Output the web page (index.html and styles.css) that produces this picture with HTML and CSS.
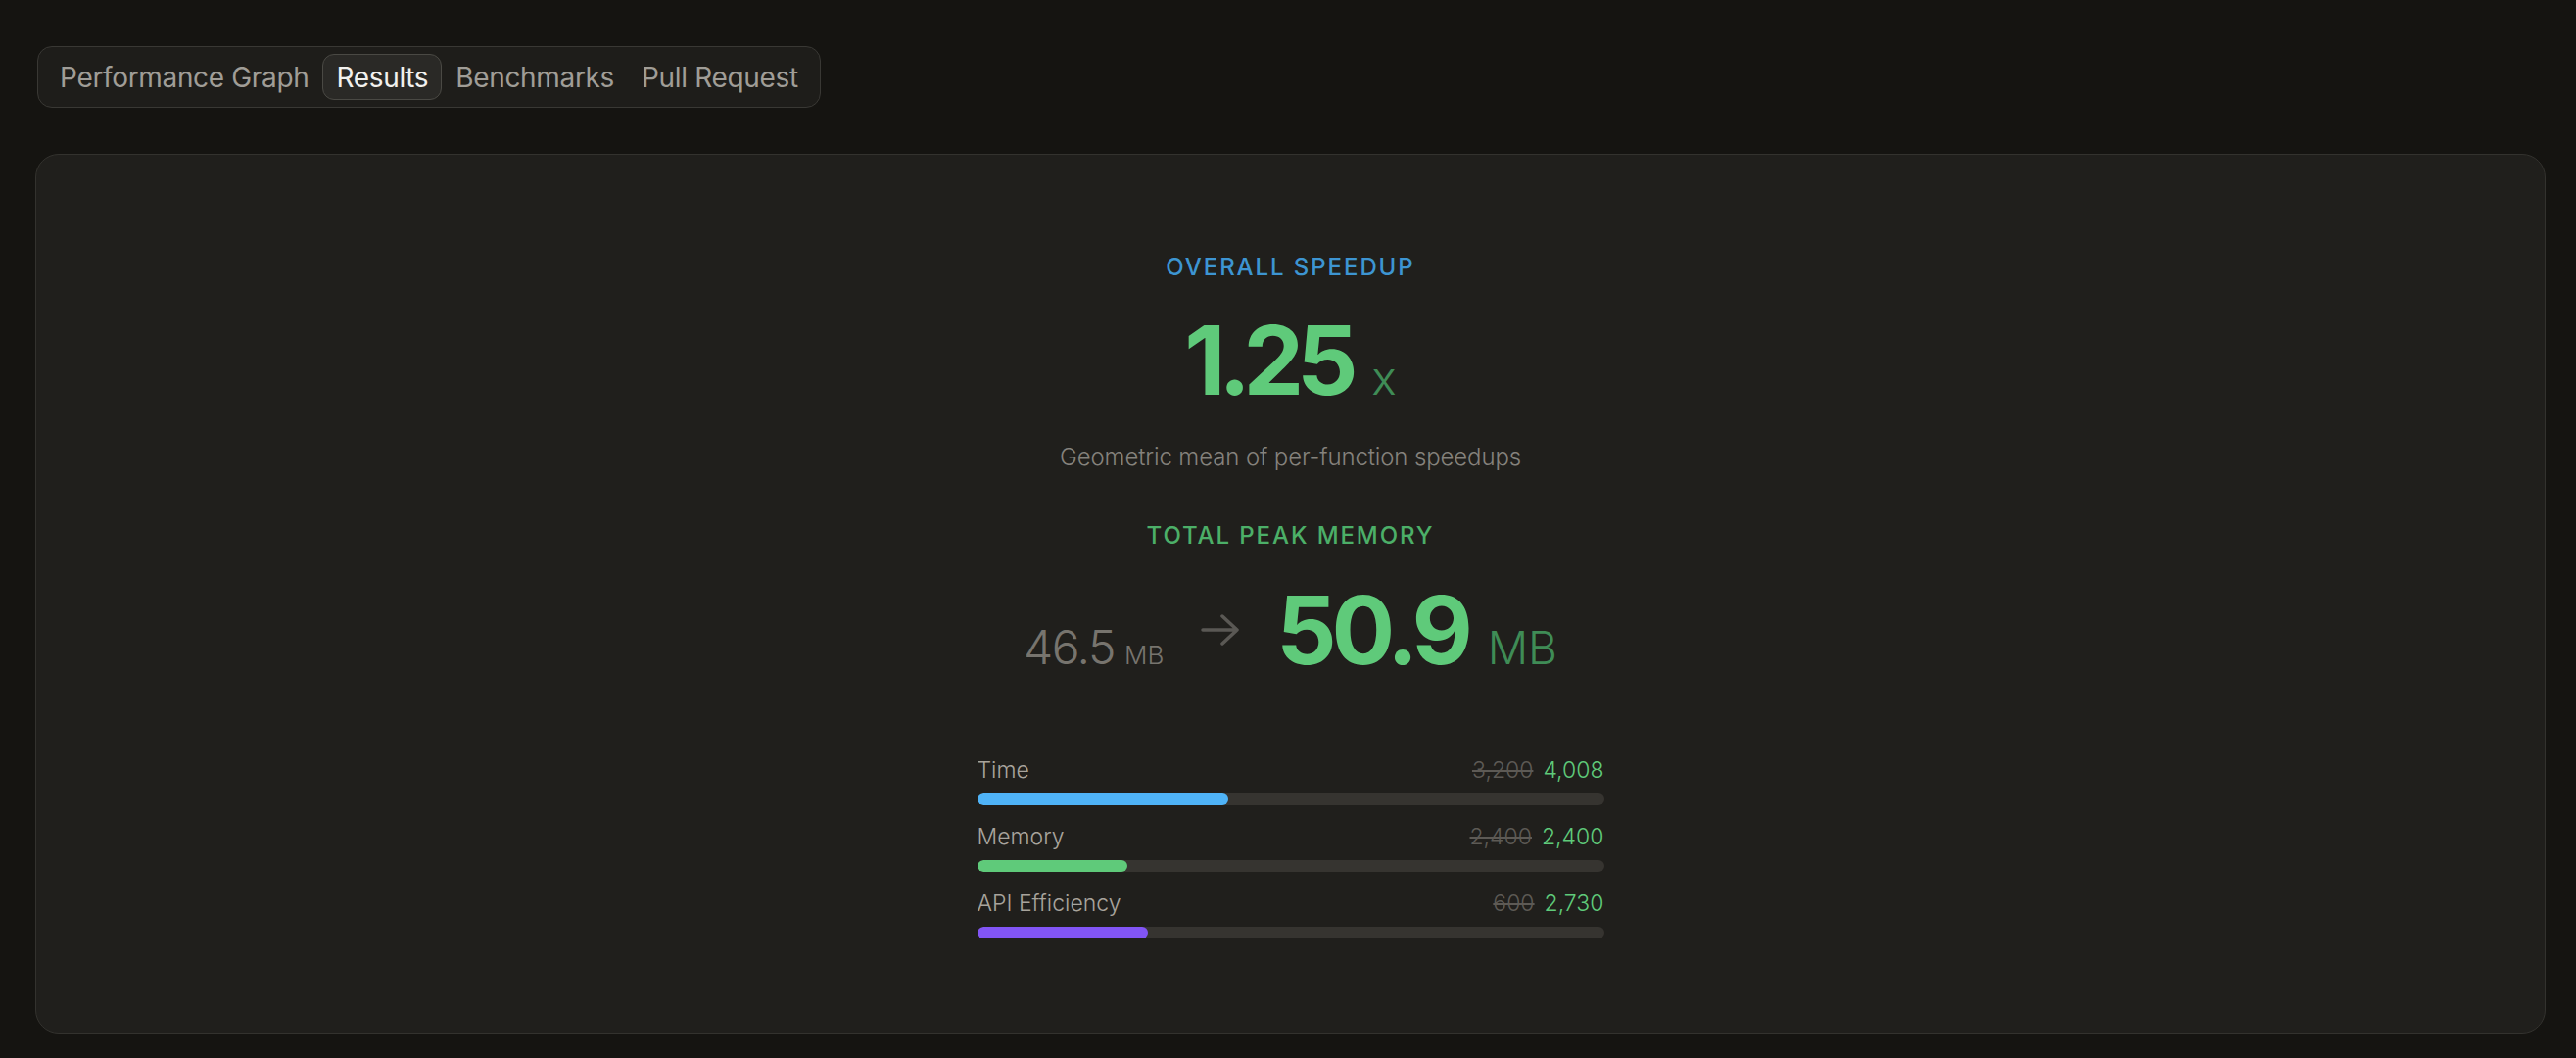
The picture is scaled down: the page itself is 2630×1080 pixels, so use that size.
FILE: index.html
```html
<!DOCTYPE html>
<html lang="en">
<head>
<meta charset="utf-8">
<title>Results</title>
<link rel="stylesheet" href="styles.css">
</head>
<body>
<div class="page">
  <nav class="tabs">
    <div class="tab">Performance Graph</div>
    <div class="tab active">Results</div>
    <div class="tab">Benchmarks</div>
    <div class="tab">Pull Request</div>
  </nav>
  <section class="card">
    <div class="eyebrow blue">OVERALL SPEEDUP</div>
    <div class="speedup"><span class="speedup-num">1.25</span><span class="speedup-unit">x</span></div>
    <div class="sub">Geometric mean of per-function speedups</div>
    <div class="eyebrow green">TOTAL PEAK MEMORY</div>
    <div class="mem">
      <span class="mem-old">46.5</span><span class="mem-old-unit">MB</span>
      <svg class="arrow" width="39" height="32" viewBox="0 0 39 32" fill="none" stroke="#5a5854" stroke-width="3.5" stroke-linecap="round" stroke-linejoin="round"><path d="M2 16H37M22 2L37 16L22 30"/></svg>
      <span class="mem-new">50.9</span><span class="mem-new-unit">MB</span>
    </div>
    <div class="metrics">
      <div class="metric">
        <div class="metric-head"><span class="metric-label">Time</span><span class="metric-vals"><span class="old">3,200</span><span class="new">4,008</span></span></div>
        <div class="track"><div class="fill fill-blue" style="width:40%"></div></div>
      </div>
      <div class="metric">
        <div class="metric-head"><span class="metric-label">Memory</span><span class="metric-vals"><span class="old">2,400</span><span class="new">2,400</span></span></div>
        <div class="track"><div class="fill fill-green" style="width:24%"></div></div>
      </div>
      <div class="metric">
        <div class="metric-head"><span class="metric-label">API Efficiency</span><span class="metric-vals"><span class="old">600</span><span class="new">2,730</span></span></div>
        <div class="track"><div class="fill fill-purple" style="width:27.3%"></div></div>
      </div>
    </div>
  </section>
</div>
</body>
</html>
```
FILE: styles.css
```css
* { box-sizing: border-box; }
html, body { margin: 0; padding: 0; }
body {
  background: #151411;
  font-family: Inter, "Noto Sans", sans-serif;
  color: #a8a49d;
  width: 2630px;
  height: 1080px;
  overflow: hidden;
}
.page {
  padding: 47px 31px 0 36px;
}
.tabs {
  display: inline-flex;
  margin-left: 2px;
  padding: 7px 8px;
  background: #1e1d1a;
  border: 1px solid #393834;
  border-radius: 15px;
}
.tab {
  height: 47px;
  line-height: 46px;
  padding: 0 13px;
  font-size: 28px;
  letter-spacing: -0.012em;
  color: #a09d97;
  border: 1px solid transparent;
  border-radius: 12px;
  white-space: nowrap;
}
.tab.active {
  color: #f2f1ee;
  background: #2a2926;
  border-color: #4a4944;
}
.card {
  margin-top: 47px;
  height: 898px;
  background: #201f1c;
  border: 1px solid #33322e;
  border-radius: 24px;
  padding: 99px 0 0;
  display: flex;
  flex-direction: column;
  align-items: center;
}
.eyebrow {
  font-size: 24px;
  line-height: 32px;
  font-weight: 500;
  letter-spacing: 0.08em;
}
.eyebrow.blue { color: #3d95d2; }
.eyebrow.green { color: #4caf68; margin-top: 48px; }
.speedup {
  margin-top: 30px;
  display: flex;
  align-items: baseline;
  height: 98px;
}
.speedup-num {
  font-size: 98px;
  line-height: 98px;
  font-weight: 700;
  letter-spacing: -0.075em;
  color: #5fca7a;
}
.speedup-unit {
  font-size: 48px;
  margin-left: 21px;
  color: #3f8c56;
  font-weight: 300;
}
.sub {
  margin-top: 34px;
  font-size: 24px;
  line-height: 32px;
  font-weight: 300;
  letter-spacing: -0.005em;
  color: #85827c;
}
.mem {
  margin-top: 32px;
  display: flex;
  align-items: baseline;
  height: 96px;
}
.mem-old {
  font-size: 48px;
  line-height: 96px;
  font-weight: 300;
  color: #77746e;
  letter-spacing: -0.03em;
}
.mem-old-unit {
  font-size: 26px;
  font-weight: 300;
  margin-left: 10px;
  color: #77746e;
}
.arrow {
  align-self: center;
  margin: 0 38px;
}
.mem-new {
  font-size: 96px;
  line-height: 96px;
  font-weight: 700;
  letter-spacing: -0.055em;
  color: #5fca7a;
}
.mem-new-unit {
  font-size: 46px;
  font-weight: 300;
  margin-left: 20px;
  color: #3f8c56;
}
.metrics {
  margin-top: 81px;
  width: 640px;
  display: flex;
  flex-direction: column;
  gap: 18px;
}
.metric-head {
  display: flex;
  justify-content: space-between;
  font-size: 23px;
  line-height: 29px;
  font-weight: 300;
}
.metric-label { color: #a8a49d; }
.old {
  color: #5d5a55;
  text-decoration: line-through;
}
.new {
  color: #5fca7a;
  margin-left: 10px;
}
.track {
  margin-top: 9px;
  height: 12px;
  border-radius: 6px;
  background: #363430;
  overflow: hidden;
}
.fill {
  height: 100%;
  border-radius: 6px;
}
.fill-blue { background: #4fb3f7; }
.fill-green { background: #5fca7a; }
.fill-purple { background: #8255f5; }
```
